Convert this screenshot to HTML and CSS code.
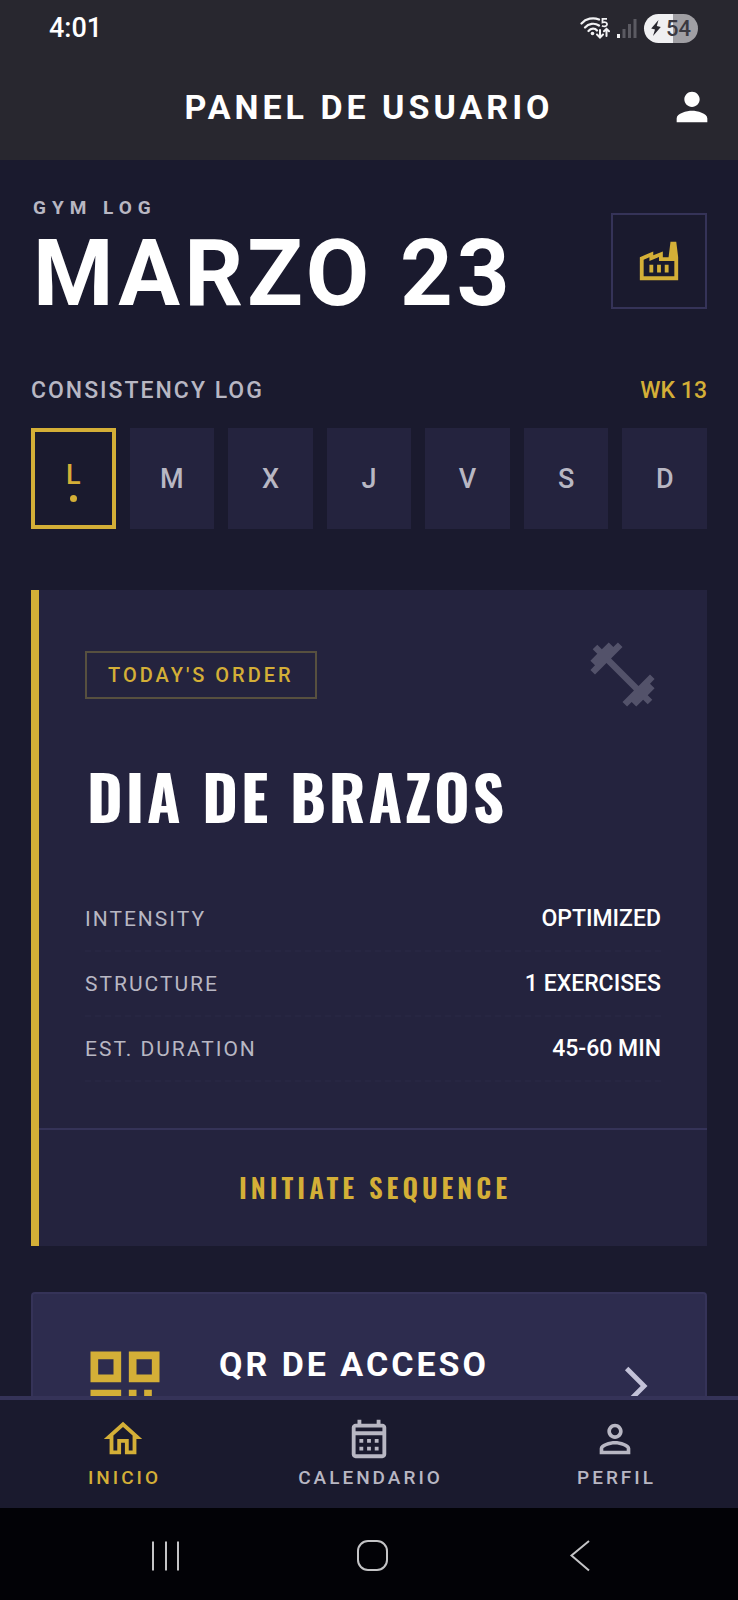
FILE: index.html
```html
<!DOCTYPE html>
<html lang="es">
<head>
<meta charset="utf-8">
<meta name="viewport" content="width=device-width, initial-scale=1">
<title>Panel de usuario</title>
<link rel="stylesheet" href="styles.css">
</head>
<body>
<div class="app">
  <header class="top">
    <div class="status">
      <span class="clock">4:01</span>
      <div class="status-icons">
        <svg class="wifi" viewBox="0 0 30 24" fill="none" stroke="#f2f2f4" stroke-width="2.2" stroke-linecap="round">
          <path d="M1.5 7.5C6 2.500 13 1 19 3.500M5 11.500C8.500 7.500 14.500 6.500 19 9.500M8.500 15C11 12 15 12 17 14.500"/>
          <circle cx="12.500" cy="17.500" r="1.800" fill="#f2f2f4" stroke="none"/>
          <path stroke-width="1.800" stroke-linecap="butt" d="M27 2.900H22.500v3.600c3-1 4.800.3 4.500 2.200-.3 1.800-3 2.200-5 1"/>
          <path stroke-width="2" d="M20 14v7m-3-2.500 3 3 3-3M26.500 20v-7m-2.500 2.300 2.500-2.500 2.500 2.500"/>
        </svg>
        <svg class="signal" viewBox="0 0 20 21">
          <rect x="0" y="16" width="3" height="4" fill="#f2f2f4"/>
          <rect x="5.500" y="11" width="3" height="9" fill="#5b5a62"/>
          <rect x="11" y="6" width="3" height="14" fill="#5b5a62"/>
          <rect x="16.500" y="1" width="3" height="19" fill="#5b5a62"/>
        </svg>
        <span class="battery">
          <svg class="bolt" viewBox="0 0 10 16"><path d="M7.500 0 .2 8.500l3.800.9L2 16l7.800-9-4-1z" fill="#28272f"/></svg>54
        </span>
      </div>
    </div>
    <div class="appbar">
      <h1 class="appbar-title">PANEL DE USUARIO</h1>
      <button class="icon-button" type="button" aria-label="Perfil">
        <svg class="icon" viewBox="0 0 24 24"><path d="M12 12c2.210 0 4-1.790 4-4s-1.790-4-4-4-4 1.790-4 4 1.790 4 4 4zm0 2c-2.670 0-8 1.340-8 4v2h16v-2c0-2.660-5.330-4-8-4z"/></svg>
      </button>
    </div>
  </header>

  <main class="content">
    <section class="date-row">
      <div class="date-block">
        <p class="eyebrow">GYM LOG</p>
        <h2 class="date">MARZO 23</h2>
      </div>
      <button class="factory" type="button" aria-label="Gimnasio">
        <svg class="icon" viewBox="0 0 24 24"><path d="M22 22H2V10l7-3v2l5-2v3h3l1-8h3l1 8v12zM12 9.950l-5 2V10l-3 1.320V20h16v-8h-8V9.950zM11 18h2v-4h-2v4zm-4 0h2v-4H7v4zm10-4h-2v4h2v-4z"/></svg>
      </button>
    </section>

    <section>
      <div class="log-head">
        <h3 class="log-title">CONSISTENCY LOG</h3>
        <span class="week">WK 13</span>
      </div>
      <div class="days">
        <div class="day day-active">L<span class="dot"></span></div>
        <div class="day">M</div>
        <div class="day">X</div>
        <div class="day">J</div>
        <div class="day">V</div>
        <div class="day">S</div>
        <div class="day">D</div>
      </div>
    </section>

    <section class="order">
      <div class="order-body">
        <div class="order-top">
          <span class="tag">TODAY'S ORDER</span>
          <svg class="dumbbell" viewBox="0 0 24 24"><path d="M20.570 14.860L22 13.430 20.570 12 17 15.570 8.430 7 12 3.430 10.570 2 9.140 3.430 7.710 2 5.570 4.140 4.140 2.710 2.710 4.140l1.430 1.430L2 7.710l1.430 1.430L2 10.570 3.430 12 7 8.430 15.570 17 12 20.570 13.430 22l1.430-1.430L16.290 22l2.140-2.140 1.430 1.430 1.430-1.430-1.430-1.430L22 16.290z"/></svg>
        </div>
        <h2 class="order-title">DIA DE BRAZOS</h2>
        <dl class="facts">
          <div class="fact"><dt>INTENSITY</dt><dd>OPTIMIZED</dd></div>
          <div class="fact"><dt>STRUCTURE</dt><dd>1 EXERCISES</dd></div>
          <div class="fact"><dt>EST. DURATION</dt><dd>45-60 MIN</dd></div>
        </dl>
      </div>
      <button class="start" type="button">INITIATE SEQUENCE</button>
    </section>

    <a class="qr" href="#qr">
      <svg class="qr-icon" viewBox="0 0 24 24"><path fill-rule="evenodd" d="M3 11h8V3H3v8zm2-6h4v4H5V5zM3 21h8v-8H3v8zm2-6h4v4H5v-4zM13 3v8h8V3h-8zm6 6h-4V5h4v4zM19 19h2v2h-2zM13 13h2v2h-2zM15 15h2v2h-2zM13 17h2v2h-2zM15 19h2v2h-2zM17 17h2v2h-2zM17 13h2v2h-2zM19 15h2v2h-2z"/></svg>
      <span class="qr-title">QR DE ACCESO</span>
      <svg class="icon chevron" viewBox="0 0 24 24"><path d="M6.230 20.230L8 22l10-10L8 2 6.230 3.770 14.460 12z"/></svg>
    </a>
  </main>

  <nav class="tabs">
    <a class="tab tab-active" href="#inicio">
      <svg class="icon" viewBox="0 0 24 24"><path d="M12 5.690l5 4.500V18h-2v-6H9v6H7v-7.810l5-4.500M12 3L2 12h3v8h6v-6h2v6h6v-8h3L12 3z"/></svg>
      <span class="tab-label">INICIO</span>
    </a>
    <a class="tab" href="#calendario">
      <svg class="icon" viewBox="0 0 24 24"><path d="M19 4h-1V2h-2v2H8V2H6v2H5c-1.110 0-1.990.9-1.990 2L3 20c0 1.100.89 2 2 2h14c1.100 0 2-.9 2-2V6c0-1.100-.9-2-2-2zm0 16H5V10h14v10zm0-12H5V6h14v2zM9 14H7v-2h2v2zm4 0h-2v-2h2v2zm4 0h-2v-2h2v2zm-8 4H7v-2h2v2zm4 0h-2v-2h2v2zm4 0h-2v-2h2v2z"/></svg>
      <span class="tab-label">CALENDARIO</span>
    </a>
    <a class="tab" href="#perfil">
      <svg class="icon" viewBox="0 0 24 24"><path d="M12 5.900c1.160 0 2.100.94 2.100 2.100s-.94 2.100-2.100 2.100S9.900 9.160 9.900 8s.94-2.100 2.100-2.100m0 9c2.970 0 6.100 1.460 6.100 2.100v1.100H5.900V17c0-.64 3.130-2.100 6.100-2.100M12 4C9.790 4 8 5.790 8 8s1.790 4 4 4 4-1.790 4-4-1.790-4-4-4zm0 9c-2.670 0-8 1.340-8 4v3h16v-3c0-2.660-5.330-4-8-4z"/></svg>
      <span class="tab-label">PERFIL</span>
    </a>
  </nav>

  <div class="system">
    <button class="system-key" type="button" aria-label="Recientes">
      <svg class="system-icon" viewBox="0 0 34 34"><path d="M4 2.500v29M17 2.500v29M29 2.500v29"/></svg>
    </button>
    <button class="system-key" type="button" aria-label="Inicio del sistema">
      <svg class="system-icon" viewBox="0 0 34 34"><rect x="2" y="2" width="29" height="29" rx="10"/></svg>
    </button>
    <button class="system-key" type="button" aria-label="Atrás">
      <svg class="system-icon" viewBox="0 0 34 34"><path d="M26 2 8.500 16.500 26 31.500"/></svg>
    </button>
  </div>
</div>
</body>
</html>
```

FILE: styles.css
```css
:root {
  --bg: #1a1a2e;
  --surface: #24233e;
  --raised: #2d2c4e;
  --line: #353358;
  --gold: #d4af37;
  --muted: #b8b7c3;
  --white: #ffffff;
}

* {
  box-sizing: border-box;
}

body,
h1,
h2,
h3,
p,
dl,
dd {
  margin: 0;
}

body {
  background: var(--bg);
  color: var(--white);
  font-family: Roboto, "Liberation Sans", sans-serif;
}

button {
  padding: 0;
  border: 0;
  background: none;
  color: inherit;
  font: inherit;
}

a {
  color: inherit;
  text-decoration: none;
}

.app {
  display: flex;
  flex-direction: column;
  height: 100vh;
}

.icon {
  display: block;
  width: 46px;
  height: 46px;
  fill: currentColor;
}

/* Top bar */

.top {
  flex: none;
  background: #28272f;
}

.status {
  display: flex;
  align-items: center;
  justify-content: space-between;
  height: 56px;
  padding: 0 40px 0 49px;
}

.clock {
  font-size: 27px;
  font-weight: 500;
}

.status-icons {
  display: flex;
  align-items: center;
  gap: 7px;
}

.wifi {
  width: 30px;
  height: 24px;
}

.signal {
  width: 20px;
  height: 21px;
}

.battery {
  display: flex;
  align-items: center;
  justify-content: center;
  gap: 5px;
  width: 54px;
  height: 29px;
  border-radius: 15px;
  background: linear-gradient(90deg, #f0f0f2 54%, #a09fa4 54%);
  color: #3a3941;
  font-size: 22px;
  font-weight: 500;
  line-height: 29px;
}

.bolt {
  width: 10px;
  height: 16px;
}

.appbar {
  display: grid;
  grid-template-columns: 46px 1fr 46px;
  align-items: center;
  height: 104px;
  padding: 0 23px 2px;
}

.appbar-title {
  grid-column: 2;
  font-size: 34px;
  font-weight: 700;
  letter-spacing: 4px;
  text-align: center;
}

/* Content */

.content {
  flex: 1;
  min-height: 0;
  padding: 35px 31px 0;
  overflow-y: auto;
  scrollbar-width: none;
}

.date-row {
  display: flex;
  align-items: center;
  justify-content: space-between;
  margin-bottom: 50px;
}

.date-block {
  padding-left: 2px;
}

.eyebrow {
  color: var(--muted);
  font-size: 19px;
  font-weight: 700;
  line-height: 26px;
  letter-spacing: 6px;
}

.date {
  font-size: 92px;
  font-weight: 700;
  line-height: 106px;
  letter-spacing: 4px;
}

.factory {
  display: flex;
  align-items: center;
  justify-content: center;
  width: 96px;
  height: 96px;
  border: 2px solid var(--line);
  color: var(--gold);
}

.log-head {
  display: flex;
  justify-content: space-between;
  margin-bottom: 23px;
  font-size: 23px;
  font-weight: 500;
  line-height: 28px;
}

.log-title {
  color: var(--muted);
  font-size: 23px;
  font-weight: 500;
  letter-spacing: 2px;
}

.week {
  color: var(--gold);
}

.days {
  display: grid;
  grid-template-columns: repeat(7, 1fr);
  gap: 14px;
}

.day {
  display: flex;
  flex-direction: column;
  align-items: center;
  justify-content: center;
  height: 101px;
  background: var(--surface);
  color: var(--muted);
  font-size: 27px;
  font-weight: 500;
  line-height: 32px;
}

.day-active {
  gap: 4px;
  padding-top: 3px;
  border: 4px solid var(--gold);
  background: none;
  color: var(--gold);
}

.dot {
  width: 7px;
  height: 7px;
  border-radius: 50%;
  background: var(--gold);
}

/* Order card */

.order {
  margin: 61px 0 46px;
  border-left: 8px solid var(--gold);
  background: var(--surface);
}

.order-body {
  padding: 46px;
}

.order-top {
  display: flex;
  align-items: center;
  justify-content: space-between;
}

.tag {
  padding: 10px 21px;
  border: 2px solid #57503f;
  color: var(--gold);
  font-size: 20px;
  font-weight: 500;
  line-height: 24px;
  letter-spacing: 3px;
}

.dumbbell {
  width: 77px;
  height: 77px;
  fill: #53526a;
}

.order-title {
  margin: 46px 0 54px;
  padding-left: 2px;
  font-family: Oswald, Roboto, sans-serif;
  font-size: 61px;
  font-weight: 700;
  line-height: 74px;
  letter-spacing: 3px;
}

.fact {
  display: flex;
  align-items: center;
  justify-content: space-between;
  height: 65px;
  border-bottom: 2px dashed #272642;
}

.fact dt {
  color: var(--muted);
  font-size: 21px;
  letter-spacing: 2px;
}

.fact dd {
  font-size: 23px;
  font-weight: 500;
}

.start {
  display: block;
  width: 100%;
  height: 118px;
  padding: 0 0 2px 4px;
  border-top: 2px solid var(--line);
  color: var(--gold);
  font-family: Oswald, Roboto, sans-serif;
  font-size: 27px;
  font-weight: 600;
  letter-spacing: 4px;
}

/* Access card */

.qr {
  display: flex;
  align-items: center;
  gap: 46px;
  padding: 46px;
  border: 2px solid var(--line);
  border-radius: 4px;
  background: var(--raised);
}

.qr-icon {
  flex: none;
  width: 92px;
  height: 92px;
  fill: var(--gold);
}

.qr-title {
  flex: 1;
  align-self: flex-start;
  padding-left: 2px;
  font-size: 34px;
  font-weight: 700;
  line-height: 48px;
  letter-spacing: 3px;
}

.chevron {
  flex: none;
  color: #c3c2d8;
}

/* Bottom tabs */

.tabs {
  display: grid;
  flex: none;
  grid-template-columns: repeat(3, 1fr);
  height: 112px;
  padding-top: 16px;
  border-top: 4px solid var(--line);
  background: var(--bg);
}

.tab {
  display: flex;
  flex-direction: column;
  align-items: center;
  gap: 4px;
  color: var(--muted);
  font-size: 19px;
  font-weight: 500;
  line-height: 24px;
  letter-spacing: 3px;
}

.tab-label {
  padding-left: 3px;
}

.tab-active {
  color: var(--gold);
}

.system {
  display: grid;
  flex: none;
  grid-template-columns: repeat(3, 1fr);
  height: 92px;
  padding: 4px 55px 0 63px;
  background: #020206;
}

.system-key {
  display: flex;
  align-items: center;
  justify-content: center;
}

.system-icon {
  width: 34px;
  height: 34px;
  fill: none;
  stroke: #c4c4c6;
  stroke-width: 2;
}
```
